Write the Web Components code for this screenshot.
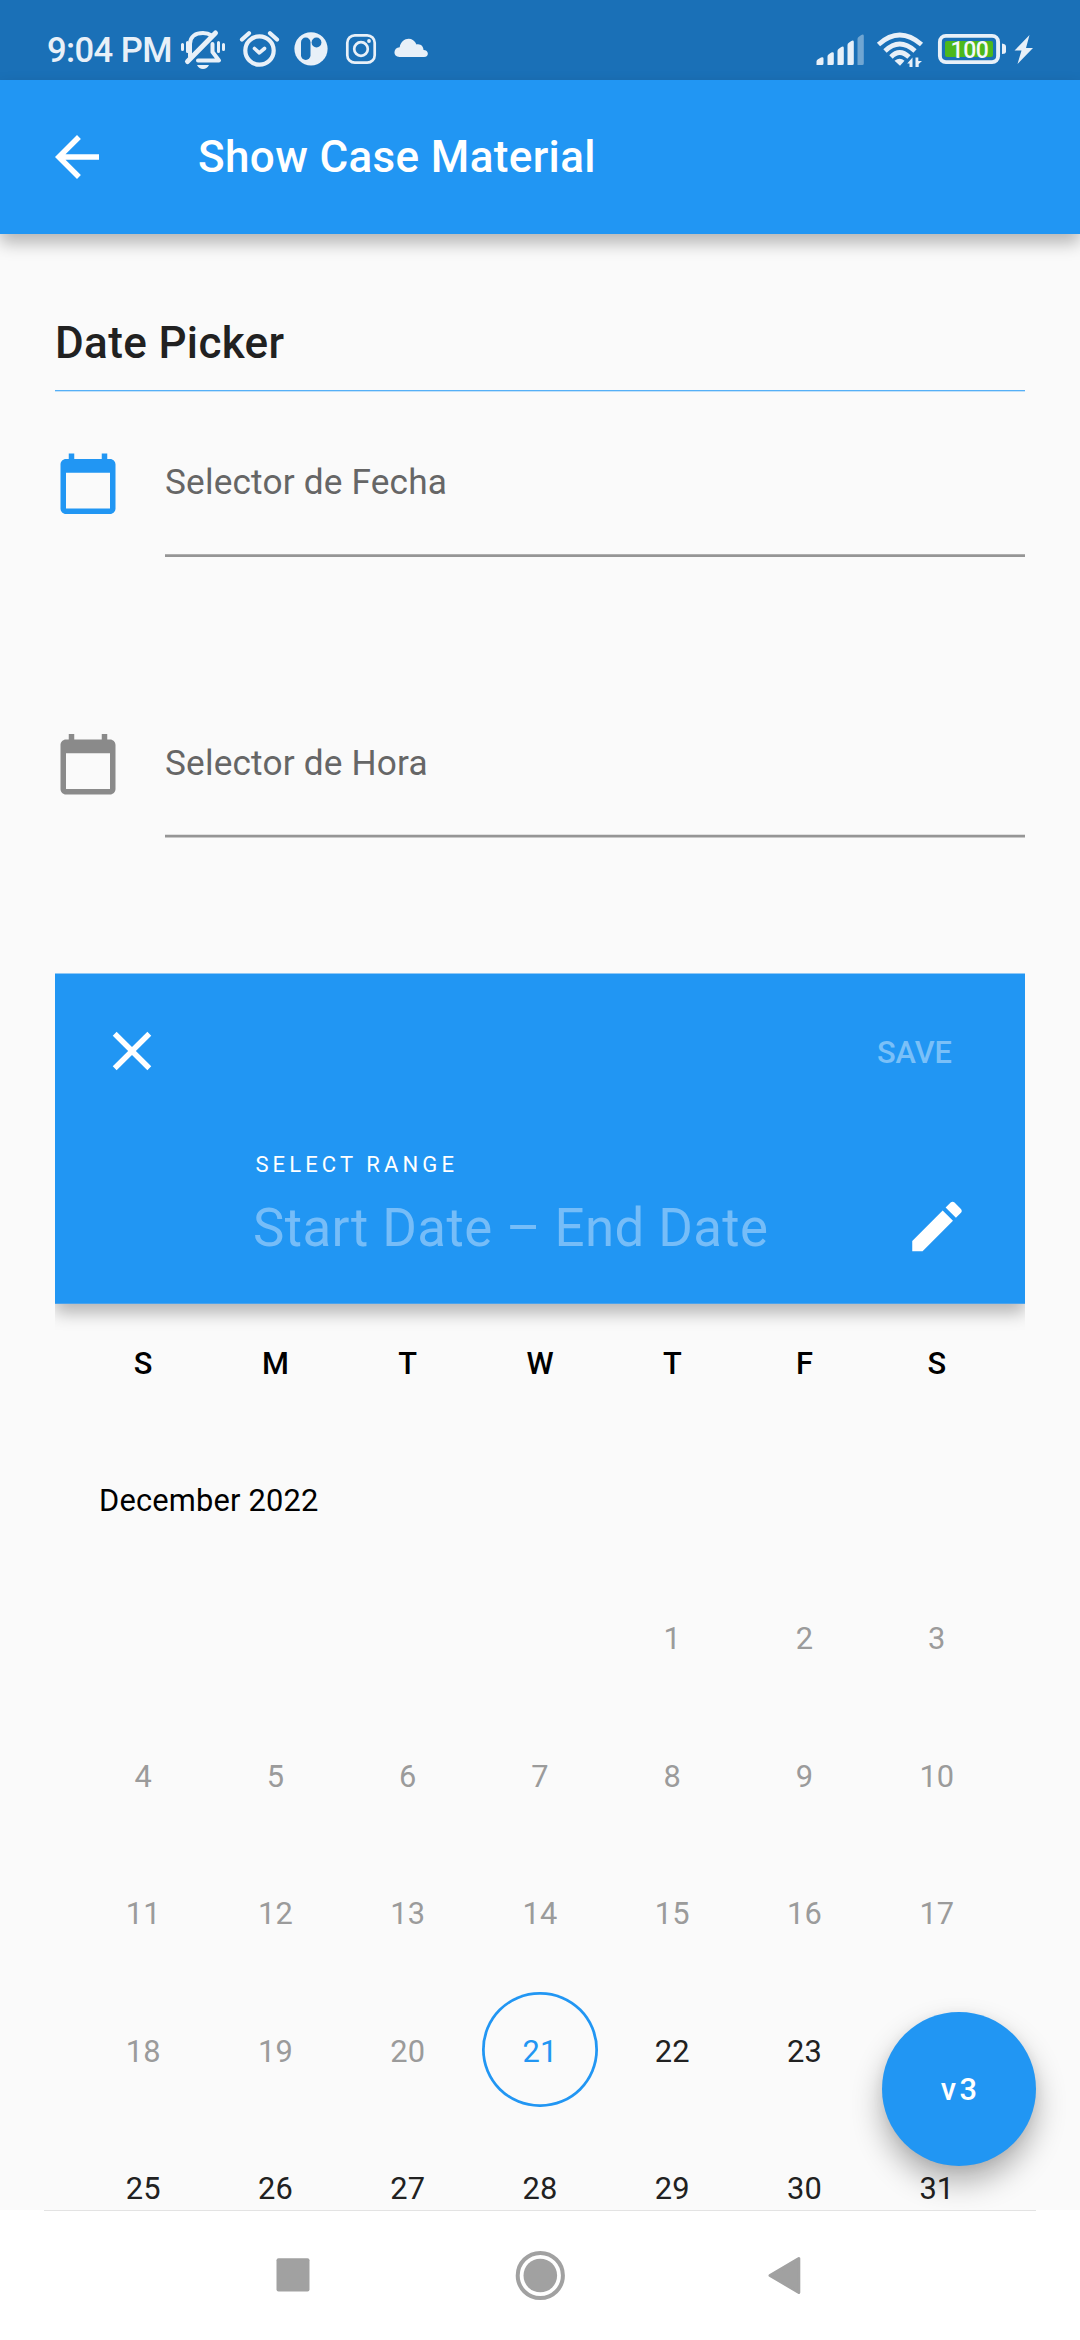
<!DOCTYPE html>
<html lang="es">
<head>
<meta charset="utf-8">
<title>Show Case Material</title>
<style>
  html, body { margin: 0; padding: 0; }
  body { width: 1080px; height: 2340px; overflow: hidden; background: #fafafa; font-family: Roboto, "Liberation Sans", sans-serif; }
</style>
</head>
<body>
<show-case-app></show-case-app>

<template id="t-app">
  <style>
    :host { display: flex; flex-direction: column; width: 1080px; height: 2340px; position: relative; overflow: hidden; color: #212121; }
    main { flex: 1; min-height: 0; overflow: hidden; padding: 83px 55px 0; display: flex; flex-direction: column; position: relative; }
    date-field + date-field { margin-top: 174px; }
    .fields { padding-top: 58px; }
    range-picker { margin-top: 135px; }
    fab-button { position: absolute; left: 882px; top: 1778px; }
    app-bar { z-index: 1; }
  </style>
  <status-bar></status-bar>
  <app-bar>Show Case Material</app-bar>
  <main>
    <section-title>Date Picker</section-title>
    <div class="fields">
      <date-field shift="0.75" line="1.25" style="--tint:#2196f3">Selector de Fecha</date-field>
      <date-field shift="0.25" line="0.75" style="--tint:#8a8a8a">Selector de Hora</date-field>
    </div>
    <range-picker></range-picker>
    <fab-button>v3</fab-button>
  </main>
  <nav-bar></nav-bar>
</template>

<template id="t-status">
  <style>
    :host { display: flex; height: 70px; padding-bottom: 10px; background: #1a70b7; color: #e8f0f8; flex: none; align-items: flex-start; box-sizing: content-box; }
    svg { display: block; flex: none; fill: currentColor; }
    .time { font-size: 34.6px; font-weight: 500; line-height: 40px; letter-spacing: -.6px; margin: 30px 0 0 47px; width: 128px; white-space: nowrap; }
    .grow { flex: 1; }
    .s { fill: none; stroke: currentColor; }
    .pct { font: 500 23px Roboto, sans-serif; fill: #f4f8fb; }
  </style>
  <span class="time">9:04 PM</span>
  <svg width="54" height="70" viewBox="175 0 54 70">
    <path class="s" stroke-width="4" d="M190 56.5 V44 C190 36 196 33 203 33 Q208 33 211.500 35.500 M212.500 44 V52 L219 60.500 H198" stroke-linecap="round" stroke-linejoin="round"/>
    <path class="s" stroke-width="5" stroke-linecap="round" d="M187.500 61.500 L215.500 33"/>
    <path d="M197 65 h12 q-2 4 -6 4 t-6 -4z"/>
    <path class="s" stroke-width="3" stroke-linecap="round" d="M182.500 44.500v5M187.500 42.500v9M218.500 42.500v9M223.500 44.500v5"/>
  </svg>
  <svg width="54" height="70" viewBox="229 0 54 70">
    <circle class="s" cx="259.500" cy="50.500" r="14.200" stroke-width="4.200"/>
    <path class="s" stroke-width="3.600" stroke-linecap="round" stroke-linejoin="round" d="M254.500 48.500 L259.300 52.800 L264.500 48.500"/>
    <path class="s" stroke-width="4.200" stroke-linecap="round" d="M242 39.500 L249 33.200 M270 33.200 L277 39.500"/>
  </svg>
  <svg width="54" height="70" viewBox="283 0 54 70">
    <circle cx="311" cy="48.800" r="16.600"/>
    <rect x="301" y="37.500" width="9.500" height="22.500" rx="4.700" fill="#1a70b7"/>
    <circle cx="316.500" cy="42.500" r="4.900" fill="#1a70b7"/>
  </svg>
  <svg width="50" height="70" viewBox="337 0 50 70">
    <rect class="s" x="347.300" y="35.300" width="27.400" height="27.400" rx="7.500" stroke-width="2.700"/>
    <circle class="s" cx="361" cy="49" r="6.800" stroke-width="2.700"/>
    <circle cx="369" cy="41" r="1.900"/>
  </svg>
  <svg width="50" height="70" viewBox="387 0 50 70">
    <path d="M399.500 57 C392.500 57 393 47.500 399.700 47.300 C401 37.500 413 35.500 416.500 44.500 C421 43.500 423.500 47 423.500 50 C429 50 429.500 57 424 57 Z"/>
  </svg>
  <span class="grow"></span>
  <svg width="60" height="70" viewBox="810 0 60 70">
    <path d="M816.500 65 v-3.500 q0 -1.500 1.500 -2.300 l3 -1.700 q2.500 -1 2.500 1 v5 q0 1.500 -1.500 1.500z M827.500 65 v-8.500 q0 -1.500 1.300 -2.200 l2.500 -1.700 q2.500 -1 2.500 1 v9.900 q0 1.500 -1.500 1.500z M837.500 65 v-14 q0 -1.500 1.300 -2.300 l2.500 -1.800 q2.500 -1 2.500 1 v15.600 q0 1.500 -1.500 1.500z M847.500 65 v-20 q0 -1.500 1.300 -2.300 l2.500 -1.800 q2.500 -1 2.500 1 v21.600 q0 1.500 -1.500 1.500z"/>
    <path opacity=".42" d="M857.500 65 v-26 q0 -1.500 1.300 -2.300 l2.500 -1.800 q2.500 -1 2.500 1 v27.600 q0 1.500 -1.500 1.500z"/>
  </svg>
  <svg width="60" height="70" viewBox="870 0 60 70">
    <path class="s" stroke-width="4.800" d="M878.500 44.500 Q899.500 25.500 921.500 44.500 M885 51 Q899.500 37 915 51 M891 57 Q899.500 48 909 57"/>
    <path d="M894.500 60.800 Q899.800 56.500 904.500 60.800 L900 65.800z"/>
    <path d="M912.500 57.500 v9.500 h-3 v-3.500 h-2.300 z M915.500 67 v-9.500 h2.800 v3.500 h3.700 l-3.300 3 v3z"/>
  </svg>
  <svg width="80" height="70" viewBox="930 0 80 70">
    <rect class="s" x="939.900" y="35.900" width="58.200" height="26.200" rx="6" stroke-width="3.900"/>
    <rect x="945" y="41" width="48" height="16" rx="2" fill="#4cb81c"/>
    <path d="M1002 43.500 q4 .5 4 3 v5 q0 2.500 -4 2.500z"/>
    <text class="pct" x="969.500" y="57.700" text-anchor="middle" letter-spacing="-.4">100</text>
  </svg>
  <svg width="70" height="70" viewBox="1010 0 70 70">
    <path d="M1029.500 35 L1014.500 50.500 H1021.500 L1017.500 64 L1033 48 H1026 Z"/>
  </svg>
</template>

<template id="t-bar">
  <style>
    :host { display: flex; flex: none; height: 154px; align-items: center; background: #2196f3; color: #fff; padding-left: 44px; box-sizing: border-box; position: relative; box-shadow: 0 9px 16px rgba(0,0,0,.28); }
    svg { width: 66px; height: 66px; display: block; fill: currentColor; }
    h1 { margin: 0 0 0 88px; font-size: 44px; font-weight: 500; line-height: 52px; letter-spacing: .36px; }
  </style>
  <svg viewBox="0 0 24 24"><path d="M20 11H7.830l5.590-5.590L12 4l-8 8 8 8 1.410-1.410L7.830 13H20v-2z"/></svg>
  <h1><slot></slot></h1>
</template>

<template id="t-title">
  <style>
    :host { display: block; font-size: 44px; font-weight: 500; line-height: 52px; letter-spacing: .36px; color: #212121; border-bottom: 1px solid #c4e1f8; }
    h2 { font: inherit; margin: 0; padding-bottom: 21px; border-bottom: 1px solid #55b0f7; }
  </style>
  <h2><slot></slot></h2>
</template>

<template id="t-field">
  <style>
    :host { display: flex; height: 107px; gap: 44px; }
    svg { display: block; }
    .icon { fill: var(--tint); flex: none; }
    .col { flex: 1; display: flex; flex-direction: column; justify-content: space-between; padding-top: 11px; }
    label { font-size: 35.200px; line-height: 42px; color: #666; letter-spacing: .18px; }
    .line { fill: #959595; margin-bottom: -1px; }
  </style>
  <svg class="icon" width="66" height="68" viewBox="0 0 66 68"><path d="M20 3h-1V1h-2v2H7V1H5v2H4c-1.100 0-2 .9-2 2v16c0 1.100.9 2 2 2h16c1.100 0 2-.9 2-2V5c0-1.100-.9-2-2-2zm0 18H4V8h16v13z"/></svg>
  <div class="col">
    <label><slot></slot></label>
    <svg class="line" width="860" height="5" viewBox="0 0 860 5"><rect width="860" height="2.750"/></svg>
  </div>
</template>

<template id="t-range">
  <style>
    :host { display: block; overflow: hidden; height: 1250px; flex: none; }
    header { height: 329px; border-top: 1px solid #8fc8f6; border-bottom: 1px solid #4ba3ec; background: #2196f3; box-shadow: 0 9px 16px rgba(0,0,0,.28); color: #fff; display: flex; flex-direction: column; }
    svg { width: 66px; height: 66px; display: block; fill: #fff; flex: none; }
    .top { display: flex; justify-content: space-between; padding: 44px 73px 0 44px; height: 66px; }
    .save { font-size: 30.800px; font-weight: 500; line-height: 36px; color: #7ac0f8; margin-top: 17px; }
    .bottom { display: flex; justify-content: space-between; padding: 66px 55px 0 198px; }
    .cap { font-size: 22px; line-height: 26px; letter-spacing: 4.125px; margin-top: 2px; padding-left: 2.400px; }
    .range { font-size: 52.800px; line-height: 62px; letter-spacing: .4px; color: #76bdf8; margin-top: 19px; white-space: nowrap; }
    .edit { margin-top: 43px; }
    .week { display: grid; grid-template-columns: repeat(7, 1fr); padding: 0 22px; margin-top: 41px; text-align: center; font-size: 30.800px; font-weight: 500; line-height: 38px; color: #000; }
    h3 { margin: 99px 0 0 44px; font-size: 30.800px; font-weight: 400; line-height: 38px; letter-spacing: .2px; color: #000; }
    month-grid { margin-top: 48px; }
  </style>
  <header>
    <div class="top">
      <svg viewBox="0 0 24 24"><path d="M19 6.410L17.590 5 12 10.590 6.410 5 5 6.410 10.590 12 5 17.590 6.410 19 12 13.410 17.590 19 19 17.590 13.410 12z"/></svg>
      <span class="save">SAVE</span>
    </div>
    <div class="bottom">
      <div>
        <div class="cap">SELECT RANGE</div>
        <div class="range">Start Date – End Date</div>
      </div>
      <svg class="edit" viewBox="0 -0.17 24 24"><path d="M3 17.250V21h3.750L17.810 9.940l-3.750-3.750L3 17.250zM20.710 7.040c.39-.39.39-1.020 0-1.410l-2.340-2.340c-.39-.39-1.020-.39-1.410 0l-1.830 1.830 3.750 3.750 1.830-1.830z"/></svg>
    </div>
  </header>
  <div class="week"><span>S</span><span>M</span><span>T</span><span>W</span><span>T</span><span>F</span><span>S</span></div>
  <h3>December 2022</h3>
  <month-grid start="4" days="31" today="21"></month-grid>
</template>

<template id="t-fab">
  <style>
    :host { display: flex; width: 154px; height: 154px; border-radius: 50%; background: #2196f3; color: #fff; align-items: center; justify-content: center; font-size: 30.800px; font-weight: 500; letter-spacing: 3.300px; line-height: 36px; box-shadow: 0 16px 30px rgba(0,0,0,.3), 0 2px 12px rgba(0,0,0,.06); }
    span { padding: 1px 0 0 3px; }
  </style>
  <span><slot></slot></span>
</template>

<template id="t-nav">
  <style>
    :host { display: flex; flex: none; flex-direction: column; height: 130px; background: #fff; position: relative; }
    hr { margin: 0 44px; border: 0; height: 1px; background: #e3e3e3; width: 992px; }
    .keys { display: flex; justify-content: center; align-items: center; gap: 181px; padding-top: 34px; }
    svg { display: block; fill: #a1a1a1; width: 66px; height: 60px; }
  </style>
  <hr>
  <div class="keys">
    <svg viewBox="259 2245 66 60"><rect x="275.500" y="2258.300" width="33" height="33.200" rx="2"/></svg>
    <svg viewBox="507 2245 66 60"><circle cx="540.300" cy="2275.500" r="22.600" fill="none" stroke="#a1a1a1" stroke-width="4"/><circle cx="540.300" cy="2275.500" r="16.800"/></svg>
    <svg viewBox="754 2245 66 60"><path d="M770 2275.500 L798.800 2258.600 V2292.400 Z" stroke="#a1a1a1" stroke-width="3" stroke-linejoin="round"/></svg>
  </div>
</template>

<script>
  const define = (name, templateId, setup) => customElements.define(name, class extends HTMLElement {
    constructor() {
      super();
      this.attachShadow({ mode: 'open' }).append(document.getElementById(templateId).content.cloneNode(true));
    }
    connectedCallback() { if (setup) setup(this, this.shadowRoot); }
  });

  define('status-bar', 't-status');
  define('app-bar', 't-bar');
  define('section-title', 't-title');
  define('date-field', 't-field', (host, root) => {
    root.querySelector('.icon path').setAttribute('transform', `translate(0 ${host.getAttribute('shift')}) scale(2.75)`);
    root.querySelector('.line rect').setAttribute('y', host.getAttribute('line'));
  });

  class MonthGrid extends HTMLElement {
    connectedCallback() {
      const start = +this.getAttribute('start'), days = +this.getAttribute('days'), today = +this.getAttribute('today');
      const root = this.attachShadow({ mode: 'open' });
      let cells = '';
      for (let d = 1; d <= days; d++) {
        const kind = d < today ? 'past' : d === today ? 'today' : '';
        const column = d === 1 ? ` style="grid-column:${start + 1}"` : '';
        cells += `<div class="day ${kind}"${column}><span>${d}</span></div>`;
      }
      root.innerHTML = `<style>
        :host { display: grid; grid-template-columns: repeat(7, 1fr); grid-auto-rows: 137.5px; padding: 0 22px; font-size: 30.8px; line-height: 36px; letter-spacing: .15px; color: #212121; }
        .day { display: flex; align-items: center; justify-content: center; }
        span { display: flex; align-items: center; justify-content: center; width: 115.5px; height: 115.5px; box-sizing: border-box; border-radius: 50%; padding-top: 5px; }
        .past { color: #9b9b9b; }
        .today { color: #2196f3; }
        .today span { box-shadow: inset 0 0 0 2.75px #2196f3; }
      </style>${cells}`;
    }
  }
  customElements.define('month-grid', MonthGrid);

  define('range-picker', 't-range');
  define('fab-button', 't-fab');
  define('nav-bar', 't-nav');
  define('show-case-app', 't-app');
</script>
</body>
</html>
